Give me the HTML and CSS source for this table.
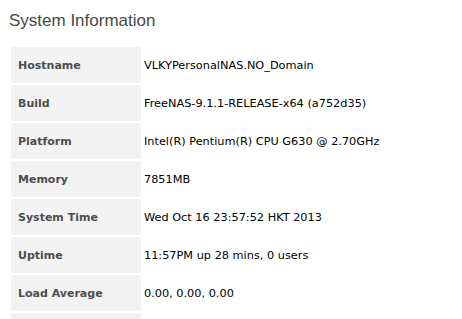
FILE: index.html
```html
<!DOCTYPE html>
<html lang="en">
<head>
  <meta charset="UTF-8">
  <meta name="viewport" content="width=device-width, initial-scale=1.0">
  <title>System Information</title>
  <link rel="stylesheet" href="styles.css">
</head>
<body>
  <div class="painel">
    <h1 class="titulo">System Information</h1>

    <table class="info-tabela">
      <tr><th>Hostname</th><td>VLKYPersonalNAS.NO_Domain</td></tr>
      <tr><th>Build</th><td>FreeNAS-9.1.1-RELEASE-x64 (a752d35)</td></tr>
      <tr><th>Platform</th><td>Intel(R) Pentium(R) CPU G630 @ 2.70GHz</td></tr>
      <tr><th>Memory</th><td>7851MB</td></tr>
      <tr><th>System Time</th><td>Wed Oct 16 23:57:52 HKT 2013</td></tr>
      <tr><th>Uptime</th><td>11:57PM up 28 mins, 0 users</td></tr>
      <tr><th>Load Average</th><td>0.00, 0.00, 0.00</td></tr>
      <tr><th></th><td></td></tr>
    </table>
  </div>
</body>
</html>
```

FILE: styles.css
```css
:root {
  --cinza-fundo: #f3f3f3;
  --texto-rotulo: #4d4d4d;
  --texto-titulo: #474747;
  --texto: #000000;
}

html {
  overflow: hidden;
}

body {
  margin: 0;
  background-color: #ffffff;
  font-family: 'DejaVu Sans', Verdana, sans-serif;
  color: var(--texto);
}

.painel {
  padding: 10px 9px;
}

.titulo {
  margin: 0 0 13px 0;
  font-family: 'Liberation Sans', Arial, sans-serif;
  font-size: 17px;
  font-weight: normal;
  line-height: 22px;
  color: var(--texto-titulo);
}

.info-tabela {
  border-collapse: separate;
  border-spacing: 2px;
  font-size: 11.3px;
}

.info-tabela th,
.info-tabela td {
  height: 36px;
  padding: 0;
  vertical-align: middle;
  text-align: left;
}

.info-tabela th {
  width: 123px;
  padding-left: 7px;
  background-color: var(--cinza-fundo);
  color: var(--texto-rotulo);
  font-size: 11px;
  font-weight: bold;
}

.info-tabela td {
  padding-left: 1px;
}
```
